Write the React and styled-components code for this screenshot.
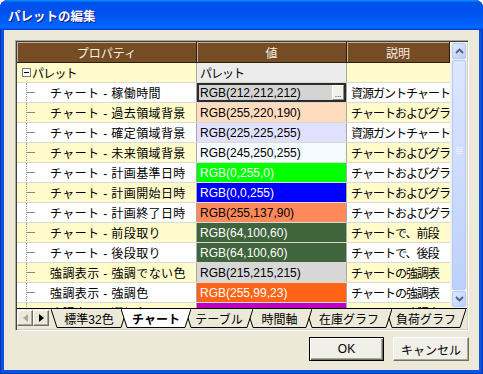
import React from "react";
import styled, { createGlobalStyle } from "styled-components";

const FONT = `"Liberation Sans", "Noto Sans CJK JP", sans-serif`;

const GlobalStyle = createGlobalStyle`
  html, body { margin: 0; padding: 0; background: #ffffff; }
  body { font-family: ${FONT}; }
`;

const rows = [
  { label: "チャート - 稼働時間", value: "RGB(212,212,212)", bg: "rgb(212,212,212)", fg: "#000", desc: "資源ガントチャート", selected: true },
  { label: "チャート - 過去領域背景", value: "RGB(255,220,190)", bg: "rgb(255,220,190)", fg: "#000", desc: "チャートおよびグラフ" },
  { label: "チャート - 確定領域背景", value: "RGB(225,225,255)", bg: "rgb(225,225,255)", fg: "#000", desc: "資源ガントチャート" },
  { label: "チャート - 未来領域背景", value: "RGB(245,250,255)", bg: "rgb(245,250,255)", fg: "#000", desc: "チャートおよびグラフ" },
  { label: "チャート - 計画基準日時", value: "RGB(0,255,0)", bg: "rgb(0,255,0)", fg: "#fff", desc: "チャートおよびグラフ" },
  { label: "チャート - 計画開始日時", value: "RGB(0,0,255)", bg: "rgb(0,0,255)", fg: "#fff", desc: "チャートおよびグラフ" },
  { label: "チャート - 計画終了日時", value: "RGB(255,137,90)", bg: "rgb(255,137,90)", fg: "#000", desc: "チャートおよびグラフ" },
  { label: "チャート - 前段取り", value: "RGB(64,100,60)", bg: "rgb(64,100,60)", fg: "#fff", desc: "チャートで、前段" },
  { label: "チャート - 後段取り", value: "RGB(64,100,60)", bg: "rgb(64,100,60)", fg: "#fff", desc: "チャートで、後段" },
  { label: "強調表示 - 強調でない色", value: "RGB(215,215,215)", bg: "rgb(215,215,215)", fg: "#000", desc: "チャートの強調表" },
  { label: "強調表示 - 強調色", value: "RGB(255,99,23)", bg: "rgb(255,99,23)", fg: "#fff", desc: "チャートの強調表" },
  { label: "強調表示 - 選択色", value: "RGB(192,0,192)", bg: "rgb(192,0,192)", fg: "#fff", desc: "チャートの強調表" },
];

const tabs = [
  { label: "標準32色", w: 76 },
  { label: "チャート", w: 70, active: true },
  { label: "テーブル", w: 68 },
  { label: "時間軸", w: 65 },
  { label: "在庫グラフ", w: 86 },
  { label: "負荷グラフ", w: 80 },
];

const Window = styled.div`
  width: 483px;
  height: 374px;
  display: flex;
  flex-direction: column;
  background: #0b52e2;
  border-radius: 8px 8px 0 0;
  overflow: hidden;
  box-shadow: inset 1px 0 #0035b5, inset -1px 0 #0035b5, inset 0 -1px #0035b5;
`;

const TitleBar = styled.div`
  height: 30px;
  flex: none;
  display: flex;
  align-items: center;
  padding-left: 8px;
  background: linear-gradient(180deg, #0997ff, #0053ee 8%, #0050ee 40%, #0066ff 88%, #0066ff 93%, #005bff 95%, #003dd7 96%, #003dd7);
  color: #fff;
  font: bold 12.5px "Noto Sans CJK JP", sans-serif;
  text-shadow: 1px 1px #0f1089;
`;

const Body = styled.div`
  flex: 1;
  margin: 0 4px 4px;
  background: #ece9d8;
  padding: 10px 10px 0 11px;
  display: flex;
  flex-direction: column;
`;

const GridFrame = styled.div`
  height: 291px;
  box-sizing: border-box;
  border: 1px solid;
  border-color: #aca899 #ffffff #ffffff #aca899;
  padding: 1px;
  box-shadow: inset 1px 1px 0 #404040, inset -1px -1px 0 #d4d0c8;
  display: flex;
  flex-direction: column;
`;

const SheetArea = styled.div`
  height: 266px;
  display: flex;
  overflow: hidden;
`;

const Table = styled.div`
  width: 433px;
  overflow: hidden;
  background: #ffffff;
`;

const HeaderRow = styled.div`
  display: grid;
  grid-template-columns: 180px 150px 103px;
  height: 21px;
  box-sizing: border-box;
  background: #764c24;
  border-bottom: 1px solid #2e1d0c;
`;

const HeaderCell = styled.div`
  display: flex;
  align-items: center;
  justify-content: center;
  color: #f6f1e6;
  font-size: 12px;
  border-right: 1px solid #2e1d0c;
  box-shadow: inset 1px 1px 0 rgba(255, 255, 255, 0.55);
`;

const Row = styled.div`
  display: grid;
  grid-template-columns: 180px 150px 103px;
  height: 20px;
  box-sizing: border-box;
  border-bottom: 1px solid #dcd9d2;
  background: ${(p) => (p.$alt ? "#fffbcb" : "#ffffff")};
`;

const PropCell = styled.div`
  display: flex;
  align-items: center;
  overflow: hidden;
  white-space: nowrap;
  border-right: 1px solid #a8a8a8;
  color: #000;
`;

const Expander = styled.span`
  width: 9px;
  height: 9px;
  box-sizing: border-box;
  margin: 0 1px 0 5px;
  border: 1px solid #7a7a7a;
  background: #fff;
  display: flex;
  align-items: center;
  justify-content: center;

  &::after {
    content: "";
    width: 5px;
    height: 1px;
    background: #000;
  }
`;

const TreeGutter = styled.span`
  width: 33px;
  height: 100%;
  flex: none;
  position: relative;

  &::before {
    content: "";
    position: absolute;
    left: 9px;
    top: 0;
    bottom: -1px;
    border-left: 1px dotted #9a9a9a;
  }
  &::after {
    content: "";
    position: absolute;
    left: 10px;
    top: 9px;
    width: 8px;
    border-top: 1px solid #8a8a8a;
  }
`;

const PropText = styled.span`
  font-size: 12px;
  letter-spacing: ${(p) => (p.$root ? "-0.8px" : "0.4px")};
`;

const ValueCell = styled.div`
  display: flex;
  align-items: center;
  overflow: hidden;
  white-space: nowrap;
  padding-left: 3px;
  border-right: 1px solid #a8a8a8;
  background: ${(p) => p.$bg};
  color: ${(p) => p.$fg};
  font-size: 12px;
  letter-spacing: ${(p) => (p.$jp ? "-1px" : "0")};
  box-shadow: ${(p) => (p.$selected ? "inset 0 0 0 2px #2b2b2b" : "none")};
`;

const ValueText = styled.span`
  flex: 1;
`;

const EllipsisButton = styled.span`
  width: 12px;
  height: 15px;
  margin-right: 2px;
  box-sizing: border-box;
  background: #f2f1ea;
  border: 1px solid;
  border-color: #ffffff #8c8a80 #8c8a80 #ffffff;
  display: flex;
  align-items: flex-end;
  justify-content: center;
  font-size: 8px;
  line-height: 8px;
  letter-spacing: 0;
  color: #000;
`;

const DescCell = styled.div`
  display: flex;
  align-items: center;
  overflow: hidden;
  white-space: nowrap;
  padding-left: 4px;
  font-size: 12px;
  letter-spacing: -1px;
  color: #000;
`;

const ScrollBar = styled.div`
  width: 17px;
  box-sizing: border-box;
  padding: 1px 1px 1px 2px;
  display: flex;
  flex-direction: column;
  gap: 1px;
  background: #f3f1ec;
`;

const ScrollPart = styled.div`
  height: ${(p) => (p.$grow ? "auto" : "16px")};
  flex: ${(p) => (p.$grow ? 1 : "none")};
  box-sizing: border-box;
  border: 1px solid #b4c8f6;
  border-radius: 2px;
  background: linear-gradient(135deg, #dde7fe, #bcd0fa);
  display: flex;
  flex-direction: column;
  align-items: center;
  justify-content: ${(p) => (p.$grow ? "flex-start" : "center")};
  padding-top: ${(p) => (p.$grow ? "86px" : "0")};
`;

const TabStrip = styled.div`
  height: 21px;
  box-sizing: border-box;
  border-top: 1px solid #000;
  background: #ece9d8;
  display: flex;
  align-items: flex-start;
`;

const NavButton = styled.div`
  width: 16px;
  height: 16px;
  margin-top: 1px;
  box-sizing: border-box;
  border: 1px solid;
  border-color: #ffffff #716f64 #716f64 #ffffff;
  box-shadow: inset -1px -1px 0 #aca899;
  display: flex;
  align-items: center;
  justify-content: center;
`;

const Tabs = styled.div`
  display: flex;
  margin-left: 2px;
`;

const Tab = styled.div`
  position: relative;
  width: ${(p) => p.$w}px;
  height: 19px;
  margin-left: ${(p) => (p.$first ? "0" : "-6px")};
  z-index: ${(p) => (p.$active ? 20 : p.$z)};
  display: flex;
  align-items: center;
  justify-content: center;
  font-size: 12px;
  font-weight: ${(p) => (p.$active ? "bold" : "normal")};
  color: #000;
`;

const TabShape = styled.svg`
  position: absolute;
  inset: 0;
`;

const TabLabel = styled.span`
  position: relative;
`;

const ButtonRow = styled.div`
  display: flex;
  justify-content: flex-end;
  gap: 9px;
  margin-top: 6px;
`;

const DialogButton = styled.button`
  width: ${(p) => p.$w}px;
  height: 24px;
  padding: 0;
  font: 12px ${FONT};
  color: #000;
  background: #f0efe8;
  border: 1px solid;
  border-color: ${(p) => (p.$default ? "#000" : "#ffffff #716f64 #716f64 #ffffff")};
  box-shadow: ${(p) =>
    p.$default
      ? "inset 1px 1px 0 #ffffff, inset -1px -1px 0 #716f64, inset -2px -2px 0 #aca899"
      : "inset -1px -1px 0 #aca899"};
`;

const Chevron = ({ down }) => (
  <svg width="9" height="6" viewBox="0 0 9 6">
    <polyline
      points={down ? "1,1 4.5,4.5 8,1" : "1,5 4.5,1.5 8,5"}
      fill="none"
      stroke="#4d6185"
      strokeWidth="1.8"
    />
  </svg>
);

const Grip = () => (
  <svg width="7" height="7" viewBox="0 0 7 7">
    {[0, 2, 4, 6].map((y) => (
      <line key={y} x1="0" x2="7" y1={y + 0.5} y2={y + 0.5} stroke="#eef3fe" />
    ))}
  </svg>
);

const Triangle = ({ left, color }) => (
  <svg width="5" height="8" viewBox="0 0 5 8">
    <polygon points={left ? "5,0 0,4 5,8" : "0,0 5,4 0,8"} fill={color} />
  </svg>
);

const App = () => {
  return (
    <>
      <GlobalStyle />
      <Window>
        <TitleBar>パレットの編集</TitleBar>
        <Body>
          <GridFrame>
            <SheetArea>
              <Table>
                <HeaderRow>
                  <HeaderCell>プロパティ</HeaderCell>
                  <HeaderCell>値</HeaderCell>
                  <HeaderCell>説明</HeaderCell>
                </HeaderRow>
                <Row $alt>
                  <PropCell>
                    <Expander />
                    <PropText $root>パレット</PropText>
                  </PropCell>
                  <ValueCell $bg="#ececec" $fg="#000" $jp>
                    <ValueText>パレット</ValueText>
                  </ValueCell>
                  <DescCell />
                </Row>
                {rows.map((r, i) => (
                  <Row key={r.label} $alt={i % 2 === 1}>
                    <PropCell>
                      <TreeGutter />
                      <PropText>{r.label}</PropText>
                    </PropCell>
                    <ValueCell $bg={r.bg} $fg={r.fg} $selected={r.selected}>
                      <ValueText>{r.value}</ValueText>
                      {r.selected && <EllipsisButton>...</EllipsisButton>}
                    </ValueCell>
                    <DescCell>{r.desc}</DescCell>
                  </Row>
                ))}
              </Table>
              <ScrollBar>
                <ScrollPart>
                  <Chevron />
                </ScrollPart>
                <ScrollPart $grow>
                  <Grip />
                </ScrollPart>
                <ScrollPart>
                  <Chevron down />
                </ScrollPart>
              </ScrollBar>
            </SheetArea>
            <TabStrip>
              <NavButton>
                <Triangle left color="#aca899" />
              </NavButton>
              <NavButton>
                <Triangle color="#000" />
              </NavButton>
              <Tabs>
                {tabs.map((t, i) => (
                  <Tab key={t.label} $w={t.w} $first={i === 0} $active={t.active} $z={tabs.length - i}>
                    <TabShape width={t.w} height="19" viewBox={`0 0 ${t.w} 19`}>
                      <polygon
                        points={`0,0 6,18.5 ${t.w - 6},18.5 ${t.w},0`}
                        fill={t.active ? "#ffffff" : "#ece9d8"}
                      />
                      <polyline
                        points={`0,0 6,18.5 ${t.w - 6},18.5 ${t.w},0`}
                        fill="none"
                        stroke="#000"
                        strokeWidth="1"
                      />
                    </TabShape>
                    <TabLabel>{t.label}</TabLabel>
                  </Tab>
                ))}
              </Tabs>
            </TabStrip>
          </GridFrame>
          <ButtonRow>
            <DialogButton $w={75} $default>OK</DialogButton>
            <DialogButton $w={76}>キャンセル</DialogButton>
          </ButtonRow>
        </Body>
      </Window>
    </>
  );
};

export default App;
